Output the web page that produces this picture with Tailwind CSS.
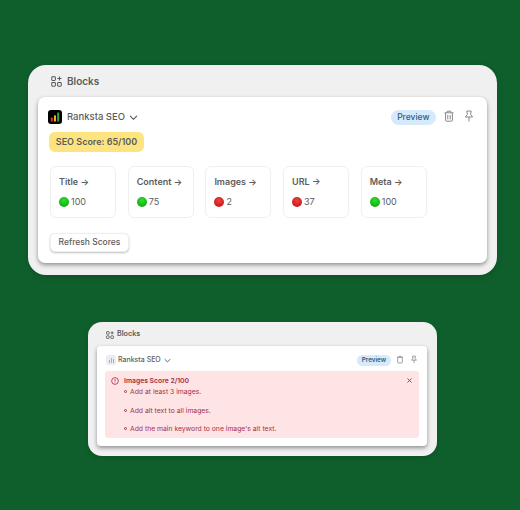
<!DOCTYPE html>
<html lang="en">
<head>
    <meta charset="UTF-8">
    <meta name="viewport" content="width=device-width, initial-scale=1.0">
    <title>Blocks</title>
    <script src="https://cdn.jsdelivr.net/npm/@tailwindcss/browser@4"></script>
</head>
<body class="bg-[#0f5f2c] font-['Inter',sans-serif] overflow-hidden">
    <div class="w-[520px] h-[510px] pt-[65px] flex flex-col">

        <!-- Large panel -->
        <div class="ml-[28px] w-[469px] h-[210px] rounded-[18px] bg-[#f0f0f0] px-[10px] shadow-[0_2px_6px_rgba(0,0,0,0.15)] flex flex-col">
            <div class="h-[32px] pl-[13px] flex items-center gap-[5px] text-[10px] font-semibold text-[#5c5c5c]">
                <svg class="w-[11px] h-[11px]" viewBox="0 0 12 12" fill="none" stroke="#555" stroke-width="1.1">
                    <rect x="0.8" y="0.8" width="4" height="4" rx="1"/>
                    <rect x="0.8" y="7.2" width="4" height="4" rx="1"/>
                    <rect x="7.2" y="7.2" width="4" height="4" rx="1"/>
                    <path d="M9.2 0.6v4.4M7 2.8h4.4"/>
                </svg>
                <span>Blocks</span>
            </div>
            <div class="h-[166px] rounded-[7px] bg-white shadow-[0_2px_4px_rgba(0,0,0,0.4)] pl-[10px] pr-[12px] pt-[12px]">
                <div class="h-[16px] flex items-center">
                    <svg class="w-[14px] h-[14px]" viewBox="0 0 14 14">
                        <rect width="14" height="14" rx="3" fill="#000"/>
                        <rect x="2.8" y="7.5" width="2" height="4" rx="0.6" fill="#e8322a"/>
                        <rect x="6" y="5.2" width="2" height="6.3" rx="0.6" fill="#f2b01e"/>
                        <rect x="9.2" y="2.6" width="2" height="8.9" rx="0.6" fill="#2fae3a"/>
                    </svg>
                    <span class="ml-[5px] text-[9.5px] font-medium text-[#5c5c5c]">Ranksta SEO</span>
                    <svg class="ml-[4px] w-[9px] h-[9px]" viewBox="0 0 10 10" fill="none" stroke="#555" stroke-width="1.2" stroke-linecap="round" stroke-linejoin="round"><path d="M1.5 3.5 5 7l3.5-3.5"/></svg>
                    <span class="ml-auto h-[15px] px-[6.5px] rounded-full bg-[#d6eafc] text-[8.5px] font-medium text-[#2f5d80] flex items-center">Preview</span>
                    <svg class="ml-[7px] -mt-[3px] w-[12px] h-[12px]" viewBox="0 0 12 12" fill="none" stroke="#888" stroke-width="1"><path d="M1.5 2.8h9M4.2 2.6V1.2h3.6v1.4M2.6 3v7.2q0 1 1 1h4.8q1 0 1-1V3M4.8 5v4.4M7.2 5v4.4"/></svg>
                    <svg class="ml-[8px] -mt-[3px] w-[12px] h-[12px]" viewBox="0 0 12 12" fill="none" stroke="#888" stroke-width="1" stroke-linejoin="round"><path d="M3.8 1h4.4L7.6 4.4 9.6 7H2.4l2-2.6zM6 7v4.4"/></svg>
                </div>
                <div class="mt-[7px] ml-[1px] w-[95px] h-[20px] rounded-[6px] bg-[#fee481] text-[9px] font-semibold text-[#5c5c5c] flex items-center justify-center">SEO Score: 65/100</div>
                <div class="mt-[14px] ml-[2px] flex gap-[11.7px]">
                    <div class="w-[66px] h-[52px] rounded-[6px] border border-[#efefef] pl-[8px] pt-[9px]">
                        <div class="text-[9px] font-semibold leading-[12px] text-[#5c5c5c]">Title →</div>
                        <div class="mt-[8px] flex items-center gap-[2px] text-[9px] leading-[12px] text-[#5c5c5c]"><span class="w-[10px] h-[10px] rounded-full bg-[radial-gradient(circle_at_50%_35%,#2fe02f,#0a9a0a)]"></span>100</div>
                    </div>
                    <div class="w-[66px] h-[52px] rounded-[6px] border border-[#efefef] pl-[8px] pt-[9px]">
                        <div class="text-[9px] font-semibold leading-[12px] text-[#5c5c5c]">Content →</div>
                        <div class="mt-[8px] flex items-center gap-[2px] text-[9px] leading-[12px] text-[#5c5c5c]"><span class="w-[10px] h-[10px] rounded-full bg-[radial-gradient(circle_at_50%_35%,#2fe02f,#0a9a0a)]"></span>75</div>
                    </div>
                    <div class="w-[66px] h-[52px] rounded-[6px] border border-[#efefef] pl-[8px] pt-[9px]">
                        <div class="text-[9px] font-semibold leading-[12px] text-[#5c5c5c]">Images →</div>
                        <div class="mt-[8px] flex items-center gap-[2px] text-[9px] leading-[12px] text-[#5c5c5c]"><span class="w-[10px] h-[10px] rounded-full bg-[radial-gradient(circle_at_50%_35%,#f04040,#b81010)]"></span>2</div>
                    </div>
                    <div class="w-[66px] h-[52px] rounded-[6px] border border-[#efefef] pl-[8px] pt-[9px]">
                        <div class="text-[9px] font-semibold leading-[12px] text-[#5c5c5c]">URL →</div>
                        <div class="mt-[8px] flex items-center gap-[2px] text-[9px] leading-[12px] text-[#5c5c5c]"><span class="w-[10px] h-[10px] rounded-full bg-[radial-gradient(circle_at_50%_35%,#f04040,#b81010)]"></span>37</div>
                    </div>
                    <div class="w-[66px] h-[52px] rounded-[6px] border border-[#efefef] pl-[8px] pt-[9px]">
                        <div class="text-[9px] font-semibold leading-[12px] text-[#5c5c5c]">Meta →</div>
                        <div class="mt-[8px] flex items-center gap-[2px] text-[9px] leading-[12px] text-[#5c5c5c]"><span class="w-[10px] h-[10px] rounded-full bg-[radial-gradient(circle_at_50%_35%,#2fe02f,#0a9a0a)]"></span>100</div>
                    </div>
                </div>
                <button class="mt-[15px] ml-[2px] w-[79px] h-[19px] rounded-[5px] bg-white border border-[#eee] shadow-[0_1px_2px_rgba(0,0,0,0.25)] text-[8.5px] font-medium text-[#5c5c5c] flex items-center justify-center">Refresh Scores</button>
            </div>
        </div>

        <!-- Small panel -->
        <div class="mt-[47px] ml-[88px] w-[349px] h-[134px] rounded-[14px] bg-[#f0f0f0] pl-[9px] pr-[10px] shadow-[0_2px_5px_rgba(0,0,0,0.15)] flex flex-col">
            <div class="h-[24px] pl-[9px] pt-[1px] flex items-center gap-[3px] text-[7.2px] font-semibold text-[#5c5c5c]">
                <svg class="w-[8px] h-[8px]" viewBox="0 0 12 12" fill="none" stroke="#555" stroke-width="1.3">
                    <rect x="0.8" y="0.8" width="4" height="4" rx="1"/>
                    <rect x="0.8" y="7.2" width="4" height="4" rx="1"/>
                    <rect x="7.2" y="7.2" width="4" height="4" rx="1"/>
                    <path d="M9.2 0.6v4.4M7 2.8h4.4"/>
                </svg>
                <span>Blocks</span>
            </div>
            <div class="h-[100px] rounded-[4px] bg-white shadow-[0_2px_4px_rgba(0,0,0,0.4)] px-[8px] pt-[8px]">
                <div class="h-[12px] flex items-center">
                    <span class="ml-[1px] w-[10px] h-[10px] rounded-[2px] bg-[#e9edf1] flex items-end justify-center gap-[1px] pb-[2px]">
                        <span class="w-[1px] h-[3px] bg-[#a9b2bc]"></span><span class="w-[1px] h-[5px] bg-[#a9b2bc]"></span><span class="w-[1px] h-[4px] bg-[#a9b2bc]"></span>
                    </span>
                    <span class="ml-[2px] text-[7px] font-medium text-[#5c5c5c]">Ranksta SEO</span>
                    <svg class="ml-[3px] w-[7px] h-[7px]" viewBox="0 0 10 10" fill="none" stroke="#555" stroke-width="1.3" stroke-linecap="round" stroke-linejoin="round"><path d="M1.5 3.5 5 7l3.5-3.5"/></svg>
                    <span class="ml-auto mt-[1px] h-[11px] px-[5px] rounded-full bg-[#d6eafc] text-[6.3px] font-semibold text-[#2f5d80] flex items-center">Preview</span>
                    <svg class="ml-[5px] -mt-[2px] w-[8px] h-[9px]" viewBox="0 0 12 12" fill="none" stroke="#888" stroke-width="1.2"><path d="M1.5 2.8h9M4.2 2.6V1.2h3.6v1.4M2.6 3v7.2q0 1 1 1h4.8q1 0 1-1V3"/></svg>
                    <svg class="ml-[6px] mr-[1px] -mt-[2px] w-[8px] h-[9px]" viewBox="0 0 12 12" fill="none" stroke="#888" stroke-width="1.2" stroke-linejoin="round"><path d="M3.8 1h4.4L7.6 4.4 9.6 7H2.4l2-2.6zM6 7v4.4"/></svg>
                </div>
                <div class="mt-[5px] h-[67px] rounded-[3px] bg-[#ffe4e6] pl-[6px] pr-[7px] pt-[5px] flex text-[#a33347]">
                    <svg class="mt-[1px] w-[8px] h-[8px] shrink-0" viewBox="0 0 10 10" fill="none" stroke="#a8283f" stroke-width="1"><circle cx="5" cy="5" r="4.2"/><path d="M5 2.6v3M5 6.8v.8"/></svg>
                    <div class="ml-[5px] flex-1">
                        <div class="text-[6.8px] font-semibold leading-[9px] text-[#a12a42]">Images Score 2/100</div>
                        <div class="mt-[2px] flex items-center gap-[3px] text-[6.8px] leading-[9px]"><span class="w-[3px] h-[3px] rounded-full border border-[#a33347]"></span>Add at least 3 images.</div>
                        <div class="mt-[9.5px] flex items-center gap-[3px] text-[6.8px] leading-[9px]"><span class="w-[3px] h-[3px] rounded-full border border-[#a33347]"></span>Add alt text to all images.</div>
                        <div class="mt-[9.5px] flex items-center gap-[3px] text-[6.8px] leading-[9px]"><span class="w-[3px] h-[3px] rounded-full border border-[#a33347]"></span>Add the main keyword to one image's alt text.</div>
                    </div>
                    <svg class="mt-[2px] w-[5px] h-[5px] shrink-0" viewBox="0 0 6 6" fill="none" stroke="#a8283f" stroke-width="1.1"><path d="M.6.6l4.8 4.8M5.4.6.6 5.4"/></svg>
                </div>
            </div>
        </div>
    </div>
</body>
</html>
